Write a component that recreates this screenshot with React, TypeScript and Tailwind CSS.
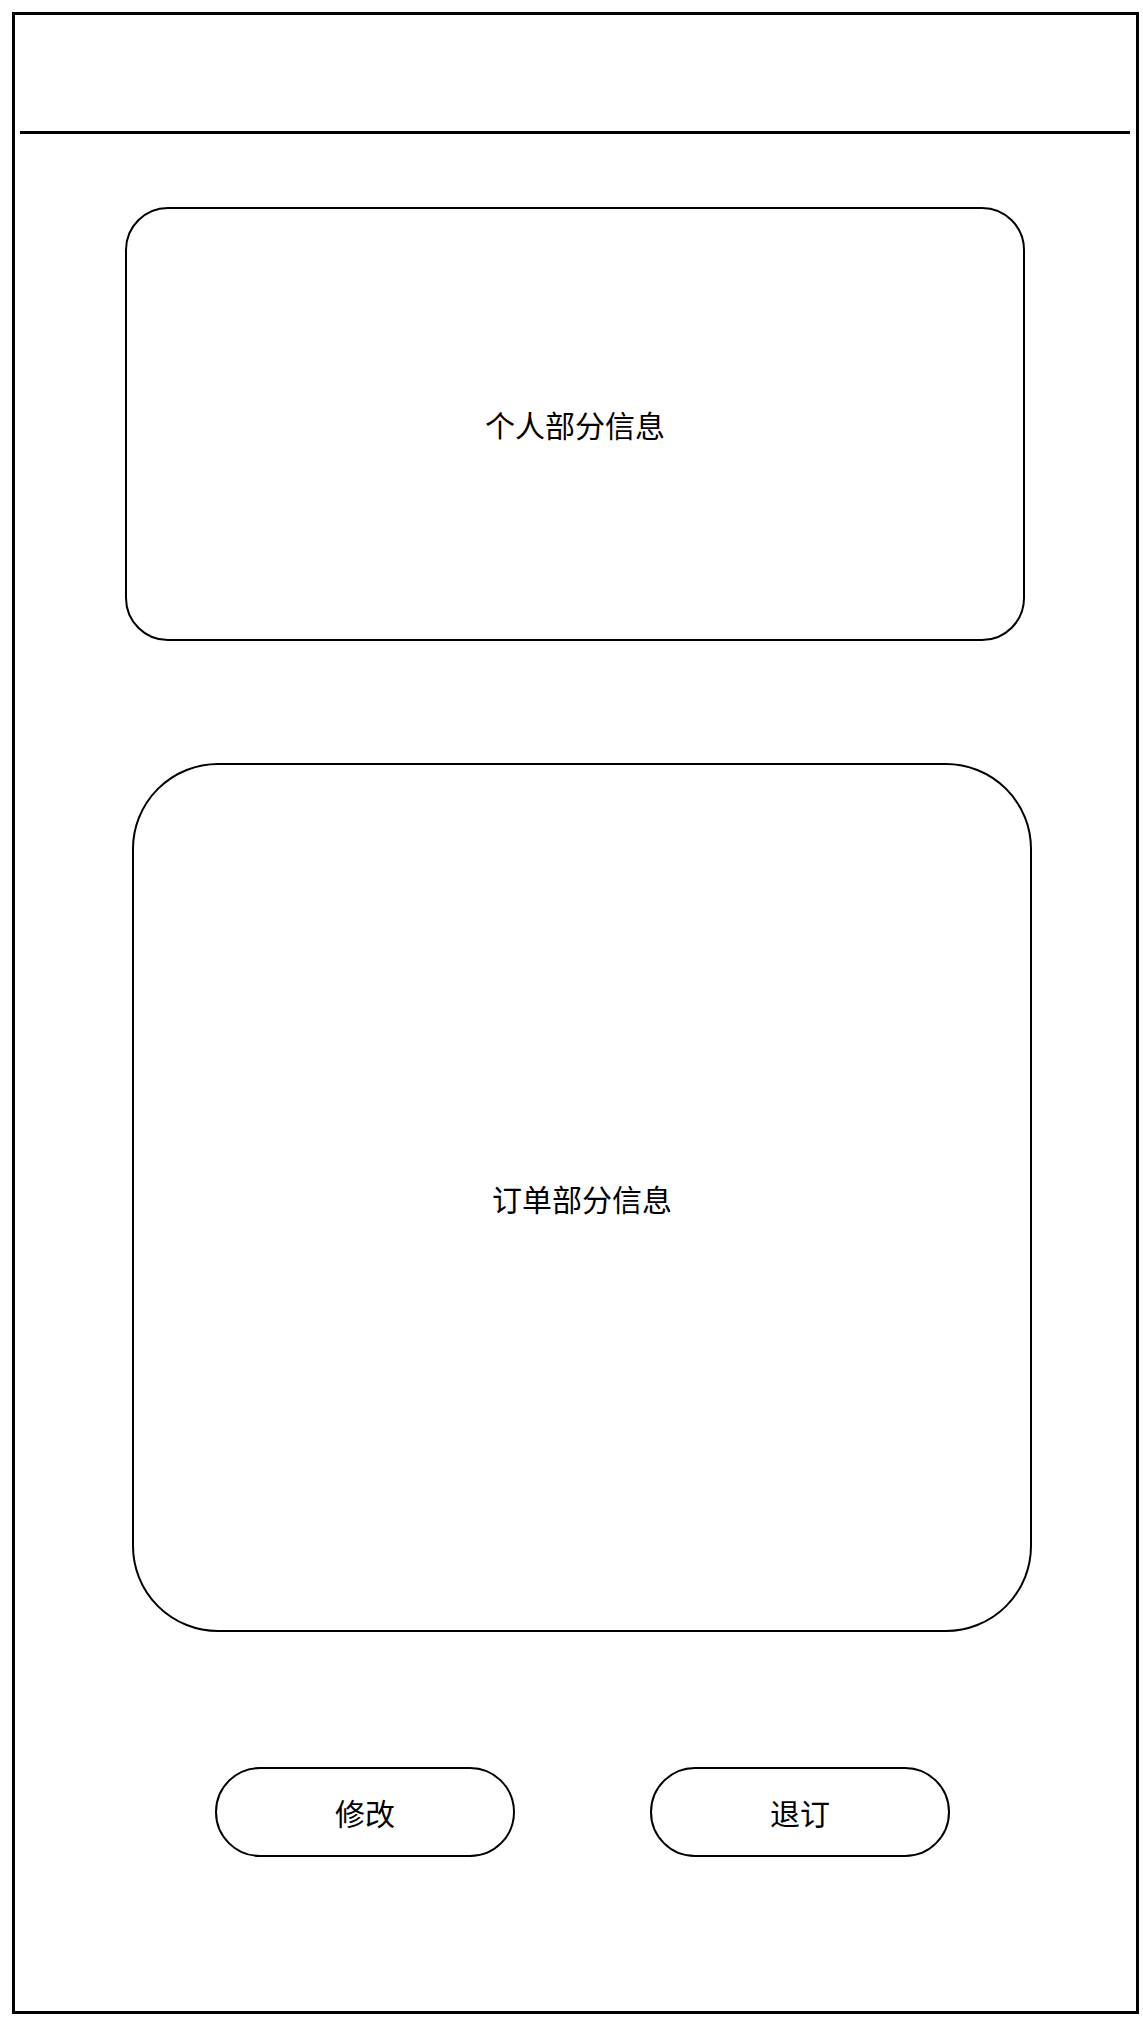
export default function App() {
  return (
    <div className="min-h-[2019px] w-[1143px] bg-white pl-[12px] pt-[12px]" style={{ fontFamily: '"Noto Sans CJK SC", "Noto Sans", sans-serif' }}>
      <div className="flex h-[2002px] w-[1127px] flex-col border-[3px] border-black">
        {/* header */}
        <div className="h-[116px]" />
        <div className="ml-[5px] h-[3px] w-[1110px] bg-black" />

        {/* personal info card */}
        <div className="ml-[110px] mt-[73px] flex h-[434px] w-[900px] items-center justify-center rounded-[43px] border-2 border-black">
          <span className="text-[30px] leading-none text-black">个人部分信息</span>
        </div>

        {/* order info card */}
        <div className="ml-[117px] mt-[122px] flex h-[869px] w-[900px] items-center justify-center rounded-[86px] border-2 border-black">
          <span className="text-[30px] leading-none text-black">订单部分信息</span>
        </div>

        {/* actions */}
        <div className="ml-[200px] mt-[135px] flex gap-[135px]">
          <button className="flex h-[90px] w-[300px] items-center justify-center rounded-full border-2 border-black text-[30px] leading-none text-black">
            修改
          </button>
          <button className="flex h-[90px] w-[300px] items-center justify-center rounded-full border-2 border-black text-[30px] leading-none text-black">
            退订
          </button>
        </div>
      </div>
    </div>
  )
}
